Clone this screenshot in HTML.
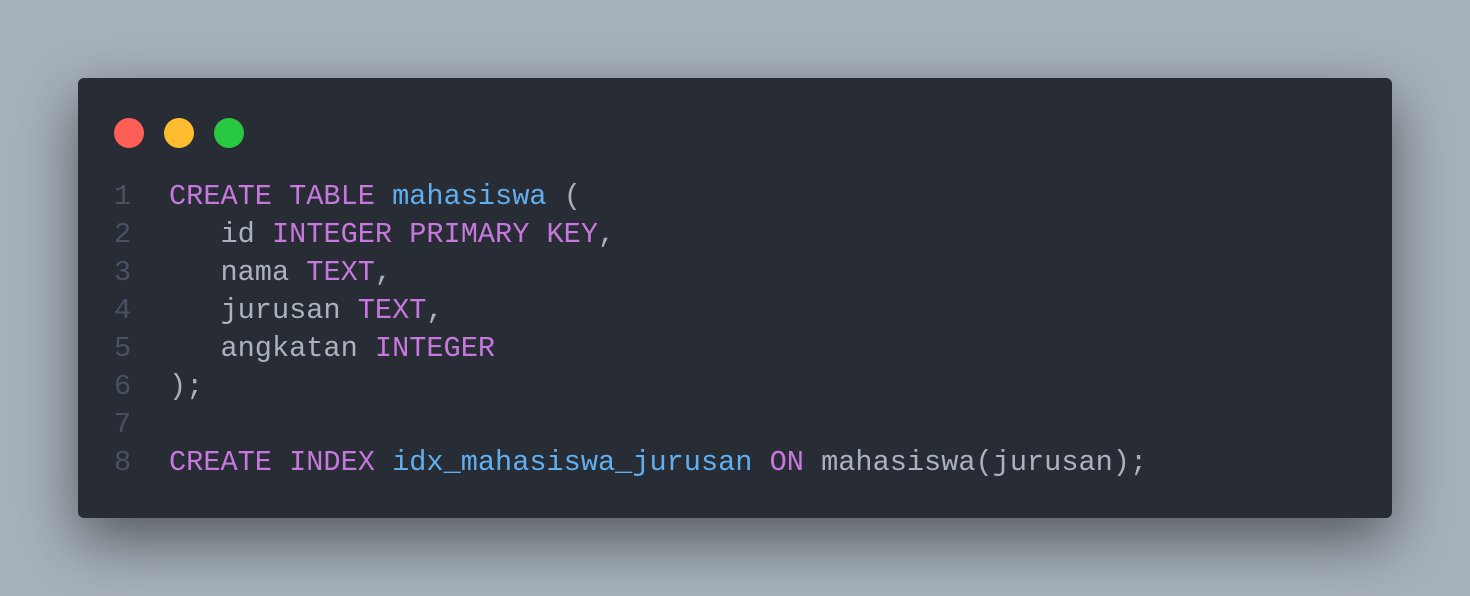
<!DOCTYPE html>
<html><head><style>
html,body{margin:0;padding:0;width:1470px;height:596px;overflow:hidden;background:#a7b1bb;}
.card{position:absolute;left:78px;top:78px;width:1314px;height:440px;background:#282c34;border-radius:6px;box-shadow:0 22px 60px rgba(0,0,0,0.5);}
.dot{position:absolute;top:40px;width:30px;height:30px;border-radius:50%;}
pre{position:absolute;margin:0;top:100px;font-family:"Liberation Mono",monospace;font-size:28.6px;line-height:38px;color:#abb2bf;}
.ln{left:36px;color:#495162;text-align:right;width:17px;}
.code{left:91px;}
.k{color:#c678dd}.b{color:#61afef}
</style></head><body>
<div class="card">
<div class="dot" style="left:36px;background:#ff5f57"></div>
<div class="dot" style="left:86px;background:#febc2e"></div>
<div class="dot" style="left:136px;background:#28c840"></div>
<pre class="ln">1
2
3
4
5
6
7
8</pre>
<pre class="code"><span class="k">CREATE TABLE</span> <span class="b">mahasiswa</span> (
   id <span class="k">INTEGER PRIMARY KEY</span>,
   nama <span class="k">TEXT</span>,
   jurusan <span class="k">TEXT</span>,
   angkatan <span class="k">INTEGER</span>
);

<span class="k">CREATE INDEX</span> <span class="b">idx_mahasiswa_jurusan</span> <span class="k">ON</span> mahasiswa(jurusan);</pre>
</div>
</body></html>
